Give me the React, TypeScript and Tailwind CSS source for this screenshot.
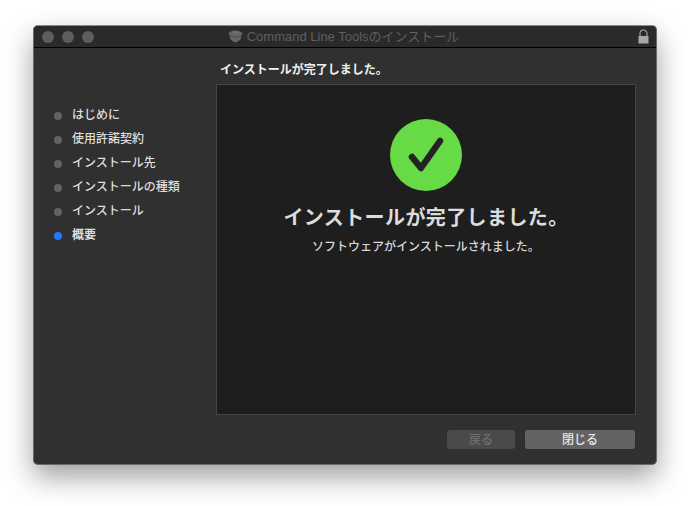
import React from 'react';

const FONT = "font-['Liberation_Sans','Noto_Sans_CJK_JP',sans-serif]";

const steps = [
  { label: 'はじめに' },
  { label: '使用許諾契約' },
  { label: 'インストール先' },
  { label: 'インストールの種類' },
  { label: 'インストール' },
  { label: '概要', active: true },
];

const TrafficLight = () => <span className="w-3 h-3 rounded-full bg-[#5e5e5e]" />;

const PackageIcon = () => (
  <svg width="15" height="13" viewBox="0 0 15 13" className="mr-[4px]">
    <path d="M0.5 3 L4 1 L7.5 0.3 L11 1 L14.5 3 L13.5 5.5 L12.5 9.5 L7.5 12.7 L2.5 9.5 L1.5 5.5 Z" fill="#666666" />
    <path d="M2 5.5 L7.5 7.5 L13 5.5" fill="none" stroke="#4d4d4d" strokeWidth="1" />
    <path d="M4 2 L7.5 3.5 L11 2" fill="none" stroke="#787878" strokeWidth="1" />
  </svg>
);

const LockIcon = () => (
  <svg width="11" height="15" viewBox="0 0 11 15">
    <path d="M2 7 V4.5 a3.5 3.5 0 0 1 7 0 V7" fill="none" stroke="#a8a8a8" strokeWidth="1.1" />
    <rect x="0.5" y="7" width="10" height="7.5" fill="#a8a8a8" />
  </svg>
);

const CheckBadge = () => (
  <svg width="72" height="72" viewBox="0 0 72 72">
    <circle cx="36" cy="36" r="36" fill="#66db46" />
    <path d="M22 38 L31 49 L50 22" fill="none" stroke="#232323" strokeWidth="6.5" strokeLinecap="round" strokeLinejoin="round" />
  </svg>
);

export default function App() {
  return (
    <div className={`${FONT} w-[690px] h-[506px] bg-white pt-[25px] pl-[33px] overflow-hidden`}>
      <div className="w-[624px] h-[440px] flex flex-col rounded-[5px] bg-[#303030] border border-[#6a6a6a] border-t-[#8a8a8a] shadow-[0_12px_28px_rgba(0,0,0,0.38)] overflow-hidden">
        <div className="relative h-[22px] shrink-0 flex items-center justify-between pl-[8px] pr-[7px] bg-[#2a2a2a] border-b border-black">
          <div className="flex gap-[8px]">
            <TrafficLight />
            <TrafficLight />
            <TrafficLight />
          </div>
          <div className="absolute inset-0 flex items-center justify-center pr-[3px]">
            <PackageIcon />
            <span className="text-[13px] leading-none text-[#5f5f5f]">Command Line Toolsのインストール</span>
          </div>
          <LockIcon />
        </div>

        <div className="flex-1 flex min-h-0">
          <ul className="w-[182px] shrink-0 pt-[55px] pl-[20px]">
            {steps.map((s) => (
              <li key={s.label} className="h-[24px] flex items-center gap-[10px]">
                <span className={`w-2 h-2 mt-[2px] rounded-full ${s.active ? 'bg-[#1f78ff]' : 'bg-[#636363]'}`} />
                <span className={`text-[12px] text-[#dedede] ${s.active ? 'font-bold' : 'font-medium'}`}>{s.label}</span>
              </li>
            ))}
          </ul>

          <div className="flex-1 flex flex-col pr-[20px]">
            <div className="h-[36px] shrink-0 pl-[4px] pt-[13px] text-[12px] leading-[18px] font-bold text-[#f0f0f0]">
              インストールが完了しました。
            </div>
            <div className="h-[331px] shrink-0 flex flex-col items-center bg-[#1e1e1e] border border-[#444444] pt-[34px]">
              <CheckBadge />
              <div className="mt-[13px] text-[20px] leading-[28px] tracking-[0.4px] font-bold text-[#dcdcdc]">インストールが完了しました。</div>
              <div className="mt-[6px] text-[12px] leading-[18px] font-medium text-[#d8d8d8]">ソフトウェアがインストールされました。</div>
            </div>
            <div className="flex justify-end gap-[10px] pt-[15px] pr-[1px]">
              <button className="w-[68px] h-[19px] rounded-[3px] bg-[#4a4a4a] text-[12px] leading-none font-medium text-[#6f6f6f]">戻る</button>
              <button className="w-[110px] h-[19px] rounded-[3px] bg-[#636363] text-[12px] leading-none font-medium text-[#e6e6e6]">閉じる</button>
            </div>
          </div>
        </div>
      </div>
    </div>
  );
}
